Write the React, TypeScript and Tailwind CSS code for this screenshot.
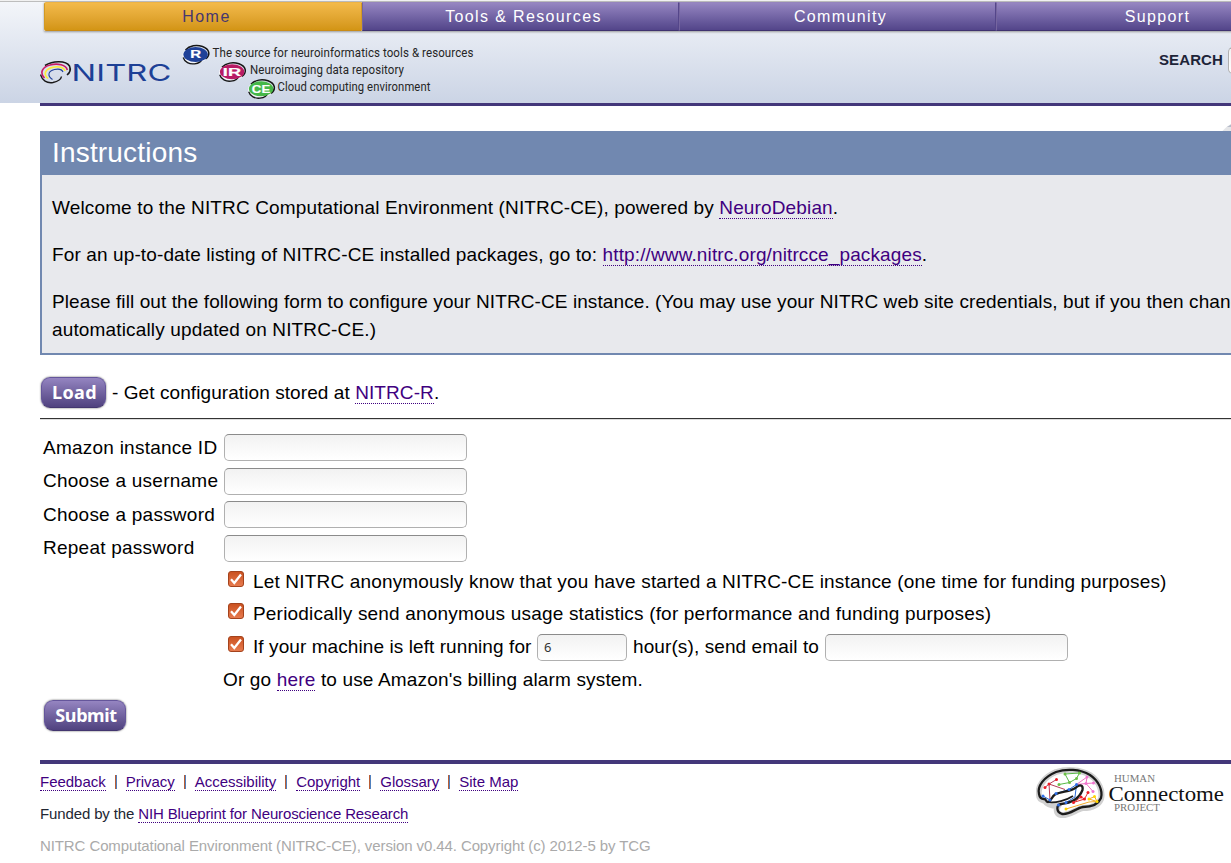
import type { ReactNode } from "react";

const link = "text-[#3f0080] border-b border-dotted border-[#3f0080] leading-none inline-block pb-px -mb-px";
const field =
  "block h-[27px] rounded-[5px] border border-[#b0b0b0] border-t-[#8b8b8b] bg-linear-to-b from-[#f2f2f2] to-white px-[6px] outline-none font-['Noto_Sans',sans-serif] text-[13px] text-[#333]";

function Link({ children }: { children: ReactNode }) {
  return <a className={link}>{children}</a>;
}

function Tab({ label, active }: { label: string; active?: boolean }) {
  return (
    <div
      className={
        active
          ? "h-[29px] w-[318px] shrink-0 rounded-l-[2px] border border-t-[#edb344] border-x-[#d39a22] border-b-[#c98b17] bg-linear-to-b from-[#f3ba4a] to-[#d39514] pl-[7px] text-center text-[16px] leading-[28px] tracking-[1.5px] text-[#46376f]"
          : "h-[29px] w-[317px] shrink-0 border border-t-[#9585bd] border-r-[#54468a] border-b-[#40336f] border-l-[#75659f] bg-linear-to-b from-[#9686c1] to-[#53458a] pl-[6px] text-center text-[16px] leading-[28px] tracking-[1.36px] text-white"
      }
    >
      {label}
    </div>
  );
}

function Badge({ x, y, color, text }: { x: number; y: number; color: string; text: string }) {
  return (
    <g transform={`translate(${x} ${y})`}>
      <ellipse cx="12.7" cy="10" rx="12.7" ry="8.300" fill="#fff" opacity=".75" />
      <path d="M3 5C7 0.500 14 -0.500 20 1.500C27 4 28.500 10 23 14" fill="none" stroke="#161616" strokeWidth="1.500" />
      <path d="M0.700 12.500C2 17 7 19.500 12 18.800C16 18.300 19 16.500 19.500 14" fill="none" stroke="#161616" strokeWidth="1.300" />
      <ellipse cx="13.1" cy="9.500" rx="12.200" ry="7.500" fill={color} />
      <text x={text.length === 1 ? 7.7 : 3.8} y="13.300" textLength={text.length === 1 ? 11 : 18.5} lengthAdjust="spacingAndGlyphs" fontFamily="Liberation Sans, sans-serif" fontWeight="bold" fontSize="11" stroke="#fff" strokeWidth=".2" fill="#fff">{text}</text>
    </g>
  );
}

function SiteLogo() {
  return (
    <svg width="440" height="62" viewBox="40 41 440 62" className="block shrink-0" aria-label="NITRC">
      <g fill="none">
        <path d="M45 65.500C53 60.500 66 60.500 69.500 66C71 69.500 69.500 73 67 75" stroke="#181818" strokeWidth="1.600" />
        <path d="M40.500 74.500C42 80.500 47 83.500 53 82.500C58 81.500 61 79.500 61.500 76.500" stroke="#181818" strokeWidth="1.400" />
        <path d="M44.500 78C39.500 73 42 67 50 65C58 62.800 66 65 67.300 70" stroke="#c81b68" strokeWidth="1.600" />
        <path d="M48 78.500C43 74 45 69 53 67.200C59 66 64 67.500 65 71" stroke="#ffee35" strokeWidth="1.600" />
        <path d="M52.500 79.500C47 76 48 71 54.500 69.500C59 68.500 62 69.500 63 72" stroke="#24449b" strokeWidth="1.100" />
      </g>
      <text x="71.500" y="81" textLength="100" lengthAdjust="spacingAndGlyphs" fontFamily="Inter, Roboto, sans-serif" fontWeight="400" fontSize="23.500" fill="#1d4096">NITRC</text>
      <Badge x={182.500} y={45} color="#1f4198" text="R" />
      <Badge x={219} y={62.300} color="#b81b65" text="IR" />
      <Badge x={248} y={79.300} color="#46b749" text="CE" />
      <g fontFamily="Roboto, sans-serif" fontSize="12.800" fill="#262626">
        <text x="212.500" y="57" textLength="261" lengthAdjust="spacingAndGlyphs">The source for neuroinformatics tools &amp; resources</text>
        <text x="250" y="74" textLength="154" lengthAdjust="spacingAndGlyphs">Neuroimaging data repository</text>
        <text x="277.500" y="91.300" textLength="153" lengthAdjust="spacingAndGlyphs">Cloud computing environment</text>
      </g>
    </svg>
  );
}

function PurpleButton({ label, className }: { label: string; className: string }) {
  return (
    <button
      type="button"
      className={`${className} h-[31px] shrink-0 whitespace-nowrap rounded-[9px] border border-[#65569b] border-b-[#43366f] bg-linear-to-b from-[#9585c1] to-[#50427f] text-center font-['Noto_Sans','Open_Sans',sans-serif] font-bold leading-[28px] text-white shadow-[0_0_2px_#555]`}
    >
      {label}
    </button>
  );
}

function Check() {
  return (
    <svg width="16" height="16" viewBox="0 0 16 16" className="mr-[9px] ml-1 -mt-[6px] block shrink-0">
      <defs>
        <linearGradient id="box" x2="0" y2="1">
          <stop stopColor="#c9501f" />
          <stop offset="1" stopColor="#e87c50" />
        </linearGradient>
      </defs>
      <rect x=".5" y=".5" width="15" height="15" rx="2.500" fill="url(#box)" stroke="#a4431d" />
      <path d="M3 8.300L6.300 12L13 3.500" fill="none" stroke="#fff" strokeWidth="2.300" />
    </svg>
  );
}

function Row({ label }: { label: string }) {
  return (
    <div className="flex h-[33.5px] items-center">
      <label className="w-[181px] whitespace-nowrap tracking-[0.24px]">{label}</label>
      <input className={`${field} w-[243px]`} />
    </div>
  );
}

const red = "#ee1c25";
const green = "#6cbf45";
const blue = "#2f6fe8";
const pink = "#f075d0";
const yellow = "#ffd800";

const nodes: [number, number, string][] = [
  [1045, 787.5, red], [1049, 784, red], [1056.5, 779.500, red],
  [1059, 784.500, green], [1065, 774, green], [1069.5, 782.500, green], [1076.5, 778.500, green], [1079.5, 773, green],
  [1043, 796, blue], [1050, 800, blue], [1056, 793.500, blue], [1058.5, 805, blue], [1069, 789.500, blue], [1076.5, 784.500, blue], [1066, 802.500, blue],
  [1087, 777, pink], [1093.5, 783, pink], [1086, 783.500, pink], [1093, 791.500, pink],
  [1088, 792.500, red], [1081, 797, red], [1084.5, 799, red], [1073.500, 802.500, red],
  [1089, 799, yellow], [1094.500, 796.500, yellow], [1097, 801.500, yellow], [1066, 809, yellow],
];

function ConnectomeLogo() {
  return (
    <svg width="192" height="56" viewBox="1036 766 192 56" className="block" aria-label="Human Connectome Project">
      <path d="M1039 795C1037 787 1044 777 1056 772C1066 769 1080 769 1090 775C1099 781 1103 791 1101 799C1098 806 1091 808 1083 808C1076 809 1070 816 1061 815C1056 814 1056 809 1058 806C1052 806 1047 805 1045 801C1041 800 1039 798 1039 795Z" fill="#fff" stroke="#d0d0d0" strokeWidth="6" />
      <g fill="none" strokeWidth="1">
        <path d="M1045 787.500L1049 784L1056.500 779.500M1049 784L1065 789.500M1049 784L1050 800" stroke="#b53d59" />
        <path d="M1059 784.500L1069.500 782.500L1065 774L1079.500 773L1076.500 778.500L1069.500 782.500" stroke="#58b947" />
        <path d="M1043 796L1050 800L1056 793.500L1069 789.500L1076.500 784.500L1075 797L1066 802.500L1058.500 805" stroke="#2868d7" />
        <path d="M1076.500 784.500L1087 777L1086 783.500L1093.500 783M1076.500 784.500L1086 783.500L1093 791.500" stroke="#ef70c2" />
        <path d="M1073.500 802.500L1081 797L1084.500 799L1088 792.500M1073.500 802.500L1084.500 799" stroke="#e32d2d" />
        <path d="M1066 809L1089 802L1097 801.500L1094.500 796.500L1089 799L1097 801.500" stroke="#f2a929" />
      </g>
      <path d="M1039 794C1037 786 1044 777 1056 772C1066 768.500 1080 769 1090 775C1099 781 1103 791 1101 798C1098 805 1091 807 1083 807C1076 808 1070 815 1062 814C1056 812 1056 805 1061 804C1071 803 1079 799 1082.500 790C1083.500 785 1080 784 1076 787.500C1070 792 1062 791 1055 794.500C1051 797 1052 801 1048 802C1045 802 1047 799 1044 799C1041 799 1039.500 797 1039 794Z" fill="none" stroke="#1c1c1c" strokeWidth="2.300" />
      <path d="M1048 802C1055 803.500 1067 800 1073 796" fill="none" stroke="#1c1c1c" strokeWidth="1.700" />
      {nodes.map(([x, y, color]) => (
        <circle key={`${x}-${y}`} cx={x} cy={y} r="1.500" fill={color} />
      ))}
      <g fontFamily="Liberation Serif, serif">
        <text x="1114" y="782" fontSize="11" fill="#777" textLength="41" lengthAdjust="spacingAndGlyphs">HUMAN</text>
        <text x="1108.500" y="800.500" fontSize="22" fill="#111" textLength="115.500" lengthAdjust="spacingAndGlyphs">Connectome</text>
        <text x="1114" y="811.300" fontSize="11" fill="#777" textLength="46" lengthAdjust="spacingAndGlyphs">PROJECT</text>
      </g>
    </svg>
  );
}

export default function App() {
  return (
    <div className="h-[863px] w-full overflow-hidden bg-white font-['Liberation_Sans',Arial,sans-serif] text-[19px] leading-[28px] tracking-[0.1px] text-black">
      <header className="h-[103px] bg-linear-to-b from-[#f4f6fa] to-[#cbd4e5] pl-10">
        <div className="-ml-10 h-[2px] border-b border-[#bdbdbd] bg-[#f1f1f1]" />
        <nav className="ml-1 flex w-[1269px] shadow-[0_1px_2px_#999]">
          <Tab label="Home" active />
          <Tab label="Tools & Resources" />
          <Tab label="Community" />
          <Tab label="Support" />
        </nav>
        <div className="flex w-[1400px] items-start pt-[10px]">
          <SiteLogo />
          <div className="ml-[679px] flex items-center pt-[5px]">
            <span className="w-[69px] text-[15px] font-bold tracking-[0.1px] text-[#1d2438]">SEARCH</span>
            <input className={`${field} w-[160px]`} />
          </div>
        </div>
      </header>
      <main className="ml-10 w-[1275px] border-t-3 border-[#43377a]">
        <div className="flex h-[25px] items-end pl-[1182px]">
          <svg width="32" height="9" className="block"><path d="M0 9.500Q4 4 13 0V9.500Z" fill="#e4e5e8" /><path d="M5 5L13 0V5Z" fill="#b4bac8" /></svg>
        </div>
        <section className="h-[224px] border-2 border-t-0 border-[#7188b0] bg-[#e8e9ed]">
          <h1 className="h-[44px] bg-[#7188b0] pl-[10px] text-[28px] leading-[43px] tracking-[0.18px] text-white">Instructions</h1>
          <div className="flex flex-col gap-[19px] whitespace-nowrap pt-[19px] pl-[10px]">
            <p className="tracking-[0.14px]">Welcome to the NITRC Computational Environment (NITRC-CE), powered by <Link>NeuroDebian</Link>.</p>
            <p className="tracking-[0.12px]">For an up-to-date listing of NITRC-CE installed packages, go to: <Link>http://www.nitrc.org/nitrcce_packages</Link>.</p>
            <p className="tracking-[0.09px]">Please fill out the following form to configure your NITRC-CE instance. (You may use your NITRC web site credentials, but if you then change<br /><span className="tracking-[0.15px]">automatically updated on NITRC-CE.)</span></p>
          </div>
        </section>
        <div className="flex h-[64px] items-center border-b border-[#333] pt-[12px] pl-px shadow-[0_1px_0_#ddd]">
          <PurpleButton label="Load" className="w-[65px] pl-[2px] pb-[2px] text-[18px] tracking-[0.4px]" />
          <span className="ml-[6px] tracking-[0.08px]">- Get configuration stored at <Link>NITRC-R</Link>.</span>
        </div>
        <form className="pt-[12px] pl-[3px]">
          <Row label="Amazon instance ID" />
          <Row label="Choose a username" />
          <Row label="Choose a password" />
          <Row label="Repeat password" />
          <div className="pl-[181px] pt-px whitespace-nowrap">
            <div className="flex h-[32px] items-center tracking-[0.17px]"><Check />Let NITRC anonymously know that you have started a NITRC-CE instance (one time for funding purposes)</div>
            <div className="flex h-[32px] items-center tracking-[0.19px]"><Check />Periodically send anonymous usage statistics (for performance and funding purposes)</div>
            <div className="flex h-[34px] items-center">
              <Check /><span className="w-[284px] tracking-[0.08px]">If your machine is left running for</span>
              <input defaultValue="6" className={`${field} w-[90px]`} />
              <span className="ml-[6px] w-[192px]">hour(s), send email to</span>
              <input className={`${field} w-[243px]`} />
            </div>
            <div className="-ml-px flex h-[32px] items-center"><p className="tracking-[0.16px]">Or go <Link>here</Link> to use Amazon's billing alarm system.</p></div>
          </div>
          <div className="flex pt-[4px] pl-px"><PurpleButton label="Submit" className="w-[82px] pl-[2px] pb-[2px] text-[18px] tracking-[-0.4px]" /></div>
        </form>
        <footer className="mt-[29px] flex border-t-4 border-[#43377a] text-[15px] tracking-normal">
          <div className="w-[996px] shrink-0 pt-[2px] text-[#222733] leading-[32px]">
            <div className="flex h-[32px] items-center gap-[9px] tracking-[-0.02px]">
              {["Feedback", "Privacy", "Accessibility", "Copyright", "Glossary", "Site Map"].map((item, index) => (
                <span key={item} className="flex items-center gap-[9px]">
                  {index > 0 && <span className="h-[14px] w-[2px] border-r border-[#5080be] bg-[#b95e35]" />}
                  <Link>{item}</Link>
                </span>
              ))}
            </div>
            <p className="h-[32px] tracking-[-0.13px]">Funded by the <Link>NIH Blueprint for Neuroscience Research</Link></p>
            <p className="h-[32px] tracking-[-0.1px] text-[#aaa]">NITRC Computational Environment (NITRC-CE), version v0.44. Copyright (c) 2012-5 by TCG</p>
          </div>
          <div className="pt-[2px]"><ConnectomeLogo /></div>
        </footer>
      </main>
    </div>
  );
}
